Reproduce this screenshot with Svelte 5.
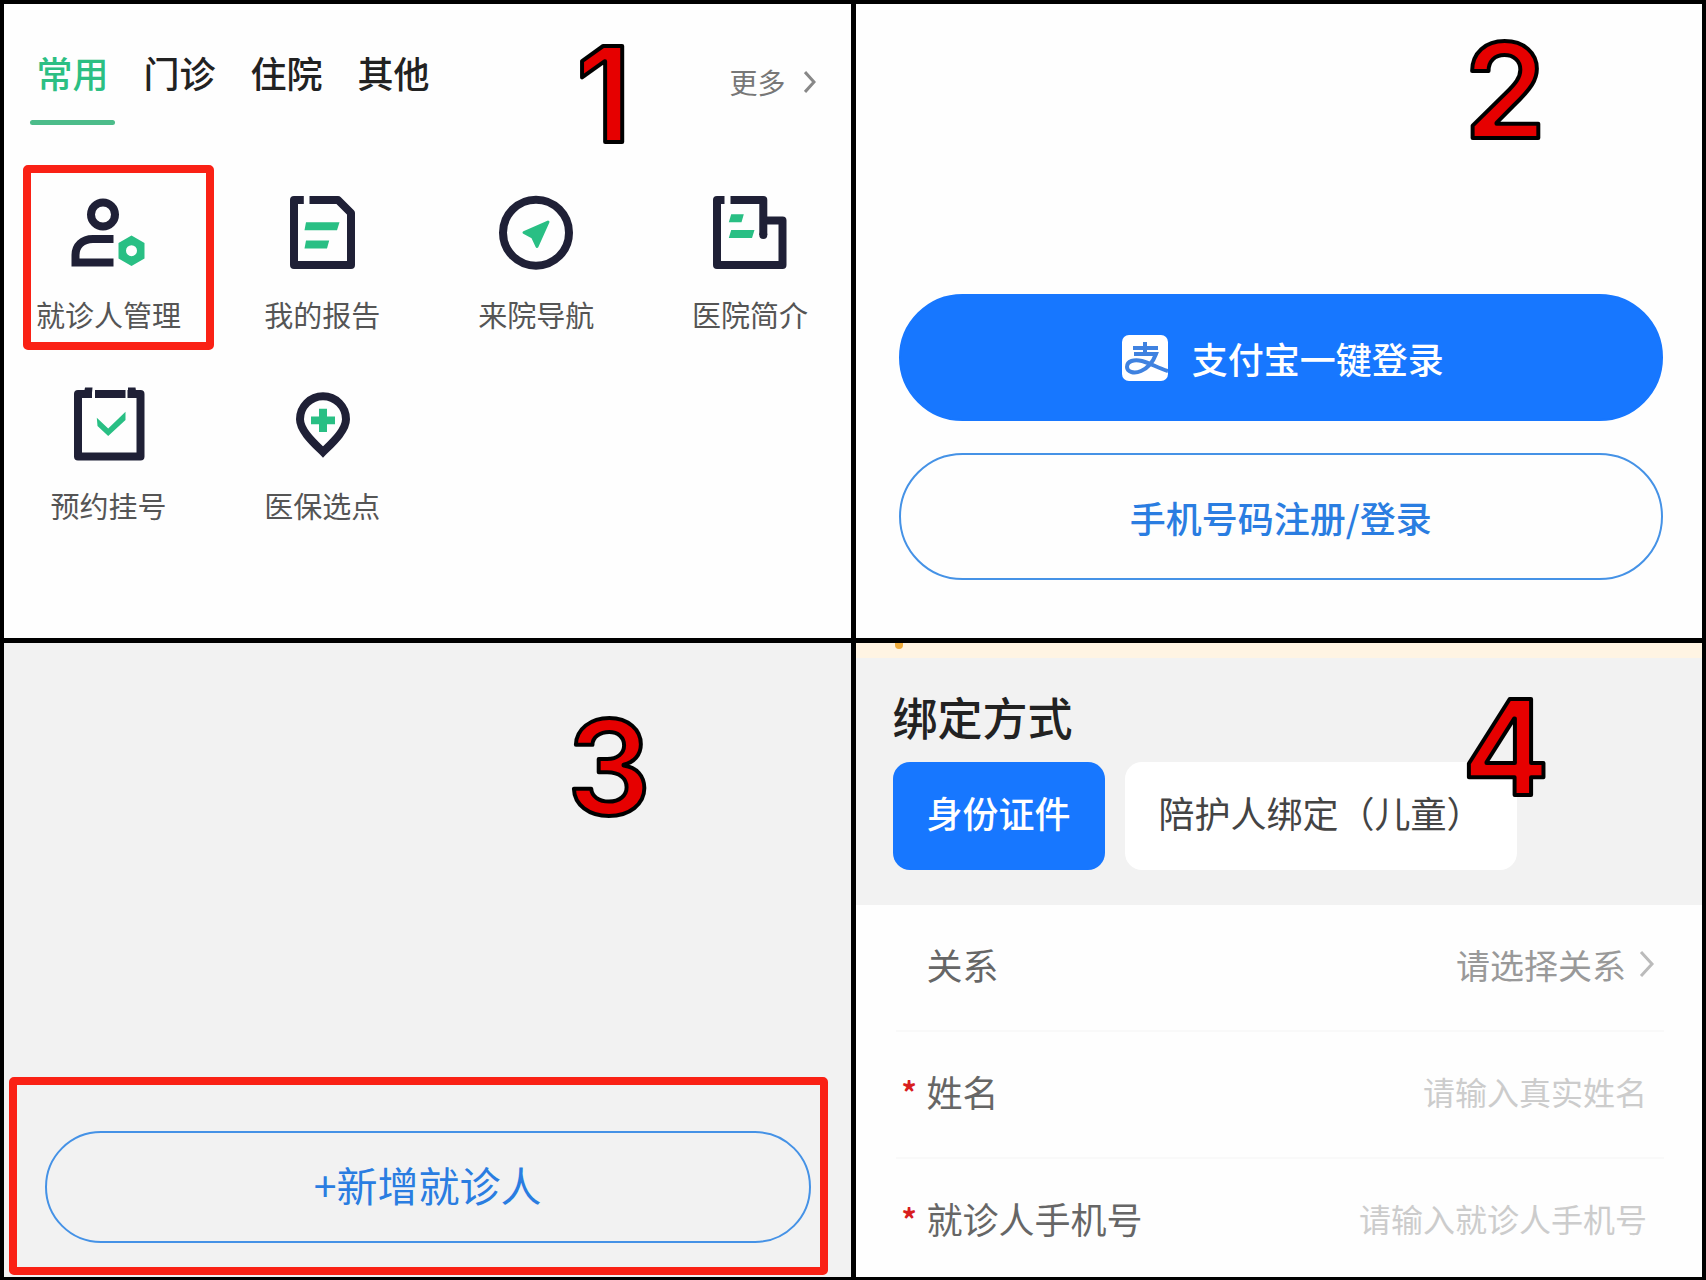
<script lang="ts">
    let activeTab: string = "常用";
    let bindType: string = "身份证件";
    let relation: string = "";
    let name: string = "";
    let phone: string = "";

    const tabs: string[] = ["常用", "门诊", "住院", "其他"];
    const bindTypes: string[] = ["身份证件", "陪护人绑定（儿童）"];

    const services: { icon: string, label: string }[] = [
        { icon: "patient", label: "就诊人管理" },
        { icon: "report", label: "我的报告" },
        { icon: "navigate", label: "来院导航" },
        { icon: "hospital", label: "医院简介" },
        { icon: "booking", label: "预约挂号" },
        { icon: "pin", label: "医保选点" }
    ];
</script>

<main>
    <section class="panel home">
        <nav>
            <div class="tabs">
                {#each tabs as tab}
                    <button class="tab" class:active={tab === activeTab} on:click={() => activeTab = tab}>{tab}</button>
                {/each}
            </div>
            <a class="more" href="#more">
                更多
                <svg width="12" height="24" viewBox="0 0 12 24"><path d="M1 2L10 12L1 22" /></svg>
            </a>
        </nav>

        <div class="services">
            {#each services as service}
                <button class="service">
                    <svg class="icon" width="80" height="80" viewBox="0 0 80 80">
                        {#if service.icon === "patient"}
                            <circle class="line" cx="35" cy="21.5" r="12" />
                            <path class="line sharp" d="M45.5 46H25C14 46 7.5 53 7.5 62V69.5H45.5" />
                            <path class="fill" fill-rule="evenodd" d="M63.5 42.5L76.5 50V65.5L63.5 73L50.5 65.5V50ZM63.5 52.2A5.5 5.5 0 1 0 63.5 63.2A5.5 5.5 0 1 0 63.5 52.2Z" />
                        {:else if service.icon === "report"}
                            <path class="line" d="M27.5 7H56L69 20V72H12V7H21.8" />
                            <path class="fill" d="M24 29.3H57.5L55 37.3H22.5ZM24 47.6H47.2L45 55.6H22.5Z" />
                        {:else if service.icon === "navigate"}
                            <circle class="line" cx="40" cy="39.7" r="33" />
                            <path class="fill arrow" d="M52 29L28 39.5L36.8 44.3L41 53.5Z" />
                        {:else if service.icon === "hospital"}
                            <path class="line" d="M20.5 7H53.3V42" />
                            <circle class="dot" cx="53.3" cy="42" r="4" />
                            <path class="line" d="M53.3 27.5H72.5V72H7V7H14.5" />
                            <path class="fill" d="M21.2 21.3H33.8L31.5 29.3H18.8ZM21.2 37H44.5L42 45H18.8Z" />
                        {:else if service.icon === "booking"}
                            <path class="line" d="M27 10H57.5M59.5 10H72.5V72.5H10V10H24" />
                            <path class="dot" d="M17 3.5H24.5L23.5 14H15ZM60 3.5H67.5L69 14H60Z" />
                            <path class="fill" d="M28.8 33.7L40.2 44.5L57.5 27.7V36L40.2 52L29.5 42Z" />
                        {:else}
                            <path class="line sharp" d="M41 68C33 60 18 47 18 35.3A23 23 0 0 1 64 35.3C64 47 49 60 41 68Z" />
                            <path class="fill" d="M37 24.7H45V32.5H53V40.3H45V48H37V40.3H29V32.5H37Z" />
                        {/if}
                    </svg>
                    <span>{service.label}</span>
                </button>
            {/each}
        </div>
        <div class="mark"></div>
        <svg class="step one" width="100" height="130"><text x="50" y="110">1</text></svg>
    </section>

    <section class="panel login">
        <button class="pill primary">
            <svg width="46" height="46" viewBox="0 0 46 46">
                <rect width="46" height="46" rx="7" fill="#fff" />
                <path class="logo" d="M11 13H36M23 7V19M12 19H34C31 27 26 33 19 36C12 39 5 37 5 32C5 26 12 24 20 26C28 28 36 33 46 36" />
            </svg>
            支付宝一键登录
        </button>
        <button class="pill">手机号码注册/登录</button>
        <svg class="step two" width="100" height="130"><text x="50" y="110">2</text></svg>
    </section>

    <section class="panel patients">
        <div class="add-box">
            <button class="pill">+新增就诊人</button>
        </div>
        <svg class="step three" width="100" height="130"><text x="50" y="110">3</text></svg>
    </section>

    <section class="panel bind">
        <div class="notice"><i></i></div>
        <header>
            <h2>绑定方式</h2>
            <div class="types">
                {#each bindTypes as type}
                    <button class:active={type === bindType} on:click={() => bindType = type}>{type}</button>
                {/each}
            </div>
        </header>
        <form>
            <div class="row">
                <label for="relation">关系</label>
                <select id="relation" bind:value={relation}>
                    <option value="">请选择关系</option>
                </select>
                <svg class="chevron" width="16" height="28" viewBox="0 0 16 28"><path d="M2 2L13 14L2 26" /></svg>
            </div>
            <div class="row">
                <span class="required">*</span>
                <label for="name">姓名</label>
                <input id="name" type="text" placeholder="请输入真实姓名" bind:value={name}>
            </div>
            <div class="row">
                <span class="required">*</span>
                <label for="phone">就诊人手机号</label>
                <input id="phone" type="tel" placeholder="请输入就诊人手机号" bind:value={phone}>
            </div>
        </form>
        <svg class="step four" width="100" height="130"><text x="50" y="110">4</text></svg>
    </section>
</main>

<style>
    :global(body) {
        background: #000;
    }

    main {
        box-sizing: border-box;
        min-height: 100vh;
        padding: 4px;
        display: grid;
        grid-template-columns: 1fr 1fr;
        grid-template-rows: 1fr 1fr;
        gap: 5px;
        background: #000;
        font-family: "Noto Sans CJK SC", sans-serif;
    }

    button, input, select {
        font-family: inherit;
        border: none;
        background: none;
        margin: 0;
        padding: 0;
    }

    .panel {
        position: relative;
        box-sizing: border-box;
        min-width: 0;
        background: #fefefe;
    }

    /* step numbers over each panel */
    .step {
        position: absolute;
        overflow: visible;
        pointer-events: none;
    }

    .step text {
        font-family: Inter, sans-serif;
        font-size: 132px;
        font-weight: 600;
        text-anchor: middle;
        fill: #e60000;
        stroke: #000;
        stroke-width: 4px;
        stroke-linejoin: round;
    }

    .one {
        left: 550px;
        top: 28px;
    }

    .two {
        left: 599px;
        top: 24px;
    }

    .three {
        left: 555px;
        top: 62px;
    }

    .four {
        left: 600px;
        top: 42px;
    }

    /* home */
    nav {
        display: flex;
        justify-content: space-between;
        align-items: flex-start;
        padding: 42px 35px 0 26px;
    }

    .tabs {
        display: flex;
        gap: 22px;
    }

    .tab {
        display: flex;
        flex-direction: column;
        align-items: center;
        gap: 22px;
        width: 85px;
        font-size: 36px;
        font-weight: 500;
        line-height: 52px;
        color: #222;
    }

    .tab::after {
        content: "";
        width: 100%;
        height: 5px;
        border-radius: 3px;
    }

    .tab.active {
        color: #2cbf83;
    }

    .tab.active::after {
        background: #4cbc8a;
    }

    .more {
        display: flex;
        align-items: center;
        gap: 18px;
        padding-top: 16px;
        font-size: 28px;
        line-height: 40px;
        color: #777;
        text-decoration: none;
    }

    .more svg, .chevron {
        fill: none;
        stroke: #888;
        stroke-width: 3;
    }

    .services {
        display: grid;
        grid-template-columns: repeat(4, 1fr);
        column-gap: 43px;
        row-gap: 49px;
        padding: 68px 15px 0 19px;
    }

    .service {
        display: flex;
        flex-direction: column;
        align-items: center;
        gap: 20px;
        font-size: 29px;
        line-height: 42px;
        color: #555;
        white-space: nowrap;
    }

    .line {
        fill: none;
        stroke: #1f2036;
        stroke-width: 8;
        stroke-linejoin: round;
    }

    .sharp {
        stroke-linejoin: miter;
    }

    .dot {
        fill: #1f2036;
    }

    .fill {
        fill: #29bf84;
    }

    .arrow {
        stroke: #29bf84;
        stroke-width: 3;
        stroke-linejoin: round;
    }

    .mark {
        position: absolute;
        left: 19px;
        top: 161px;
        width: 175px;
        height: 169px;
        border: 8px solid #fa2115;
        border-radius: 5px;
    }

    /* login */
    .pill {
        display: flex;
        align-items: center;
        justify-content: center;
        gap: 24px;
        width: 100%;
        height: 127px;
        border: 2px solid #4592e6;
        border-radius: 64px;
        font-size: 36px;
        font-weight: 500;
        color: #2a7de1;
    }

    .primary {
        padding-left: 4px;
        border-color: #1777ff;
        background: #1777ff;
        color: #fff;
    }

    .login {
        display: flex;
        flex-direction: column;
        gap: 32px;
        padding: 290px 39px 58px 43px;
    }

    .logo {
        fill: none;
        stroke: #3f82e0;
        stroke-width: 4;
    }

    /* patients */
    .patients {
        display: flex;
        flex-direction: column;
        justify-content: flex-end;
        padding: 0 23px 2px 5px;
        background: #f2f2f2;
    }

    .add-box {
        padding: 46px 9px 24px 28px;
        border: 8px solid #fa2115;
        border-radius: 5px;
    }

    .add-box .pill {
        height: 112px;
        padding-bottom: 6px;
        font-size: 41px;
        font-weight: 400;
    }

    /* bind */
    .notice {
        height: 15px;
        padding-left: 39px;
        background: #fff4e3;
    }

    .notice i {
        display: block;
        width: 8px;
        height: 6px;
        border-radius: 0 0 4px 4px;
        background: #f0ac3c;
    }

    header {
        padding: 26px 37px 35px;
        background: #f2f2f2;
    }

    h2 {
        margin: 0 0 12px;
        font-size: 45px;
        font-weight: 500;
        line-height: 66px;
        color: #222;
    }

    .types {
        display: flex;
        gap: 20px;
    }

    .types button {
        height: 108px;
        padding: 0 34px 8px;
        border-radius: 17px;
        background: #fff;
        font-size: 36px;
        color: #444;
    }

    .types .active {
        background: #1777ff;
        color: #fff;
        font-weight: 500;
    }

    form {
        padding: 0 38px 0 40px;
    }

    .row {
        display: flex;
        align-items: center;
        padding: 33px 17px 40px 31px;
        border-bottom: 2px solid #f9f9f9;
        line-height: 52px;
    }

    .row:first-child {
        padding-right: 9px;
    }

    .row:last-child {
        padding-bottom: 30px;
        border-bottom: none;
    }

    .row label {
        font-size: 36px;
        color: #666;
    }

    .required {
        width: 25px;
        margin-left: -25px;
        font-size: 30px;
        font-weight: 700;
        line-height: 36px;
        color: #d81e1e;
    }

    .row select {
        appearance: none;
        flex: 1;
        min-width: 0;
        margin-right: 13px;
        font-size: 34px;
        text-align-last: right;
        color: #999;
    }

    .row input {
        flex: 1;
        min-width: 0;
        height: 52px;
        font-size: 32px;
        text-align: right;
    }

    .row input::placeholder {
        color: #ccc;
    }

    .chevron {
        stroke: #bbb;
    }
</style>
